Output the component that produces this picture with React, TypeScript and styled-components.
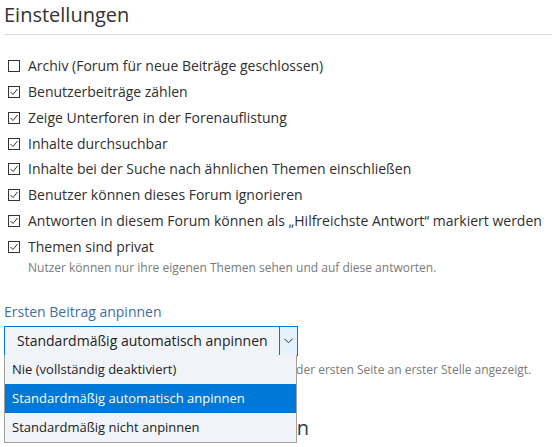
import React from 'react';
import styled, { createGlobalStyle } from 'styled-components';

const GlobalStyle = createGlobalStyle`
body {
    margin: 0;
    background: #fff;
    font-family: "Open Sans", "Noto Sans", sans-serif;
    color: #2f2f2f;
}
`;

const Page = styled.div`
    padding: 0 0 0 4px;
    overflow: hidden;
    height: 447px;
`;

const Title = styled.h2`
    margin: 0;
    padding: 1px 0 5px;
    font-size: 20px;
    line-height: 28px;
    font-weight: 400;
    color: #333;
    border-bottom: 1px solid #dcdcdc;
`;

const Options = styled.div`
    display: flex;
    flex-direction: column;
    gap: 5.85px;
    padding: 21px 0 0 4px;
`;

const Row = styled.label`
    display: flex;
    align-items: center;
    gap: 8px;
    font-size: 14px;
    line-height: 20px;
    color: #2f2f2f;
`;

const Box = styled.span`
    width: 12px;
    height: 12px;
    flex: none;
    display: flex;
    align-items: center;
    justify-content: center;
    border: 1px solid #333;
    box-sizing: border-box;
    background: #fff;
`;

const Hint = styled.div<{ $indent?: boolean }>`
    font-size: 12px;
    line-height: 16px;
    color: #7a7a7a;
    white-space: nowrap;
    padding-left: ${p => (p.$indent ? '20px' : '0')};
    margin-top: ${p => (p.$indent ? '-3px' : '6px')};
`;

const Field = styled.div`
    margin-top: 26px;
`;

const FieldLabel = styled.div`
    font-size: 14px;
    line-height: 20px;
    color: #3f6ea6;
    margin-bottom: 4px;
`;

const SelectWrap = styled.div`
    position: relative;
    width: 294px;
`;

const Select = styled.div`
    display: flex;
    height: 30px;
    box-sizing: border-box;
    border: 1px solid #0078d7;
    background: #f1f5f9;
`;

const SelectValue = styled.div`
    flex: 1;
    padding-left: 12px;
    font-size: 14px;
    line-height: 28px;
    color: #222;
    white-space: nowrap;
`;

const Arrow = styled.div`
    width: 17px;
    display: flex;
    align-items: center;
    justify-content: center;
    background: #e5f1fb;
    border-left: 1px solid #0078d7;
`;

const Menu = styled.ul`
    position: absolute;
    top: 29px;
    left: 0;
    width: 293px;
    margin: 0;
    padding: 0;
    list-style: none;
    box-sizing: border-box;
    border: 1px solid #a0a0a0;
    border-top: none;
    background: #f0f4f8;
    z-index: 2;
`;

const MenuItem = styled.li<{ $active?: boolean }>`
    height: 29px;
    padding-left: 7px;
    font-size: 13px;
    line-height: 29px;
    white-space: nowrap;
    color: ${p => (p.$active ? '#fff' : '#222')};
    background: ${p => (p.$active ? '#0078d7' : 'transparent')};
`;

const SubTitle = styled.h2`
    margin: 36px 0 0;
    font-size: 20px;
    line-height: 28px;
    font-weight: 400;
    letter-spacing: -0.13px;
    white-space: nowrap;
    color: #2f3b4c;
`;

const Check = () => (
    <svg width="10" height="10" viewBox="0 0 10 10">
        <path d="M1.5 5 L4 7.5 L8.5 2" fill="none" stroke="#333" strokeWidth="1" />
    </svg>
);

const settings = [
    { text: 'Archiv (Forum für neue Beiträge geschlossen)', checked: false },
    { text: 'Benutzerbeiträge zählen', checked: true },
    { text: 'Zeige Unterforen in der Forenauflistung', checked: true },
    { text: 'Inhalte durchsuchbar', checked: true },
    { text: 'Inhalte bei der Suche nach ähnlichen Themen einschließen', checked: true },
    { text: 'Benutzer können dieses Forum ignorieren', checked: true },
    { text: 'Antworten in diesem Forum können als „Hilfreichste Antwort“ markiert werden', checked: true },
    { text: 'Themen sind privat', checked: true },
];

const choices = [
    'Nie (vollständig deaktiviert)',
    'Standardmäßig automatisch anpinnen',
    'Standardmäßig nicht anpinnen',
];

export default function App() {
    return (
        <Page>
            <GlobalStyle />
            <Title>Einstellungen</Title>
            <Options>
                {settings.map(s => (
                    <Row key={s.text}>
                        <Box>{s.checked ? <Check /> : null}</Box>
                        {s.text}
                    </Row>
                ))}
                <Hint $indent>Nutzer können nur ihre eigenen Themen sehen und auf diese antworten.</Hint>
            </Options>
            <Field>
                <FieldLabel>Ersten Beitrag anpinnen</FieldLabel>
                <SelectWrap>
                    <Select>
                        <SelectValue>Standardmäßig automatisch anpinnen</SelectValue>
                        <Arrow>
                            <svg width="9" height="6" viewBox="0 0 9 6">
                                <path d="M0.5 0.8 L4.5 4.8 L8.5 0.8" fill="none" stroke="#333" strokeWidth="1" />
                            </svg>
                        </Arrow>
                    </Select>
                    <Menu>
                        {choices.map((c, i) => (
                            <MenuItem key={c} $active={i === 1}>{c}</MenuItem>
                        ))}
                    </Menu>
                </SelectWrap>
                <Hint>
                    Der erste Beitrag eines Themas wird nun immer auf der ersten Seite an erster Stelle angezeigt.
                </Hint>
                <SubTitle>Beitragsfreigabe und Moderation</SubTitle>
            </Field>
        </Page>
    );
}
